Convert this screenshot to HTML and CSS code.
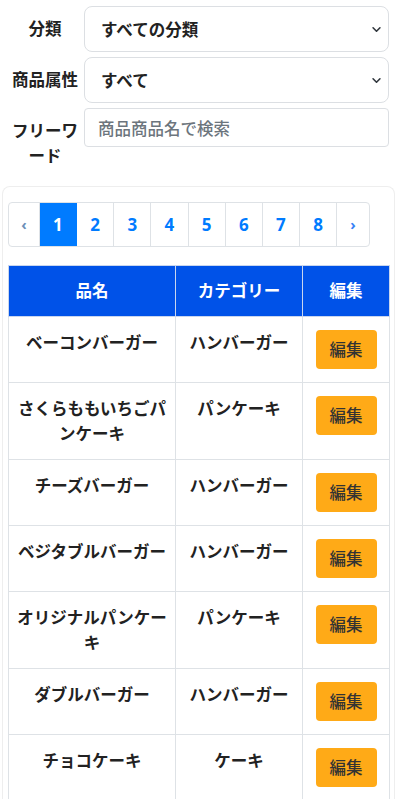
FILE: index.html
```html
<!DOCTYPE html>
<html lang="ja">
<head>
<meta charset="utf-8">
<title>商品一覧</title>
<link rel="stylesheet" href="styles.css">
</head>
<body>
<form class="filters">
  <div class="frow">
    <label class="flabel">分類</label>
    <select class="fselect"><option>すべての分類</option></select>
  </div>
  <div class="frow">
    <label class="flabel">商品属性</label>
    <select class="fselect"><option>すべて</option></select>
  </div>
  <div class="frow">
    <label class="flabel">フリーワード</label>
    <input class="finput" type="text" placeholder="商品商品名で検索">
  </div>
</form>
<div class="card">
  <ul class="pager">
    <li class="pg arrow">‹</li>
    <li class="pg active">1</li>
    <li class="pg">2</li>
    <li class="pg">3</li>
    <li class="pg">4</li>
    <li class="pg">5</li>
    <li class="pg">6</li>
    <li class="pg">7</li>
    <li class="pg">8</li>
    <li class="pg arrow last">›</li>
  </ul>
  <table class="items">
    <colgroup><col class="c1"><col class="c2"><col class="c3"></colgroup>
    <thead>
      <tr><th>品名</th><th>カテゴリー</th><th>編集</th></tr>
    </thead>
    <tbody>
      <tr><td>ベーコンバーガー</td><td>ハンバーガー</td><td><button class="edit">編集</button></td></tr>
      <tr><td>さくらももいちごパンケーキ</td><td>パンケーキ</td><td><button class="edit">編集</button></td></tr>
      <tr><td>チーズバーガー</td><td>ハンバーガー</td><td><button class="edit">編集</button></td></tr>
      <tr><td>ベジタブルバーガー</td><td>ハンバーガー</td><td><button class="edit">編集</button></td></tr>
      <tr><td>オリジナルパンケーキ</td><td>パンケーキ</td><td><button class="edit">編集</button></td></tr>
      <tr><td>ダブルバーガー</td><td>ハンバーガー</td><td><button class="edit">編集</button></td></tr>
      <tr><td>チョコケーキ</td><td>ケーキ</td><td><button class="edit">編集</button></td></tr>
    </tbody>
  </table>
</div>
</body>
</html>
```
FILE: styles.css
```css
* { box-sizing: border-box; }
body {
  margin: 0;
  padding-top: 6px;
  background: #fff;
  font-family: "Noto Sans CJK JP", "Noto Sans", sans-serif;
  font-size: 16.5px;
  color: #222;
}
.filters {
  margin: 0 11px 18px 10px;
}
.frow {
  display: grid;
  grid-template-columns: 70px 1fr;
  column-gap: 4px;
  align-items: start;
  margin-bottom: 5px;
}
.frow:last-child { margin-bottom: 0; }
.flabel {
  padding-top: 10px;
  line-height: 25px;
  font-weight: 700;
  text-align: center;
  color: #222;
}
.fselect {
  appearance: none;
  -webkit-appearance: none;
  width: 100%;
  height: 46px;
  margin: 0;
  padding: 0 30px 0 16px;
  border: 1px solid #dcdfe3;
  border-radius: 8px;
  background-color: #fff;
  background-image: url("data:image/svg+xml,%3csvg xmlns='http://www.w3.org/2000/svg' viewBox='0 0 16 16'%3e%3cpath fill='none' stroke='%23343a40' stroke-linecap='round' stroke-linejoin='round' stroke-width='2.4' d='m3 5.5 5 5 5-5'/%3e%3c/svg%3e");
  background-repeat: no-repeat;
  background-position: right 6px center;
  background-size: 11px 11px;
  font-family: inherit;
  font-size: 16.5px;
  font-weight: 700;
  color: #222;
}
.finput {
  width: 100%;
  height: 39px;
  margin: 0;
  padding: 0 13px;
  border: 1px solid #dcdfe3;
  border-radius: 4px;
  font-family: inherit;
  font-size: 16.5px;
  color: #222;
}
.finput::placeholder { color: #6c757d; font-weight: 500; }
.card {
  margin: 0 5px 0 2px;
  padding: 15px 4px 0 5px;
  border: 1px solid #eeeeee;
  border-bottom: none;
  border-radius: 8px 8px 0 0;
}
.pager {
  display: flex;
  list-style: none;
  margin: 0 0 18px 0;
  padding: 0;
  width: 362px;
  border: 1px solid #dee2e6;
  border-radius: 4px;
  overflow: hidden;
}
.pg {
  width: 37.3px;
  height: 43px;
  line-height: 43px;
  text-align: center;
  font-family: "Noto Sans", "Noto Sans CJK JP", sans-serif;
  font-size: 17px;
  font-weight: 700;
  color: #007bff;
  border-right: 1px solid #dee2e6;
}
.pg.arrow { width: 31px; font-size: 15px; color: #3b82f6; }
.pg.arrow:first-child { color: #6c8fb8; }
.pg.last { border-right: none; width: 32px; }
.pg.active { background: #007bff; color: #fff; border-right-color: #007bff; }
.items {
  width: 381px;
  table-layout: fixed;
  border-collapse: collapse;
}
.c1 { width: 167px; }
.c2 { width: 127px; }
.c3 { width: 87px; }
.items th, .items td {
  border: 1px solid #dee2e6;
  padding: 13px 7px;
  line-height: 25px;
  text-align: center;
  vertical-align: top;
}
.items th {
  padding: 12px 7px 13px;
  background: #0052e8;
  color: #fff;
  font-weight: 700;
  border-color: #c9d6ee;
}
.items td {
  font-weight: 700;
  color: #222;
}
.edit {
  margin: 0;
  padding: 7px 14px;
  line-height: 25px;
  border: none;
  border-radius: 4px;
  background: #ffaa17;
  color: #333;
  font-family: inherit;
  font-size: 16.5px;
  font-weight: 500;
  display: inline-block;
}
```
